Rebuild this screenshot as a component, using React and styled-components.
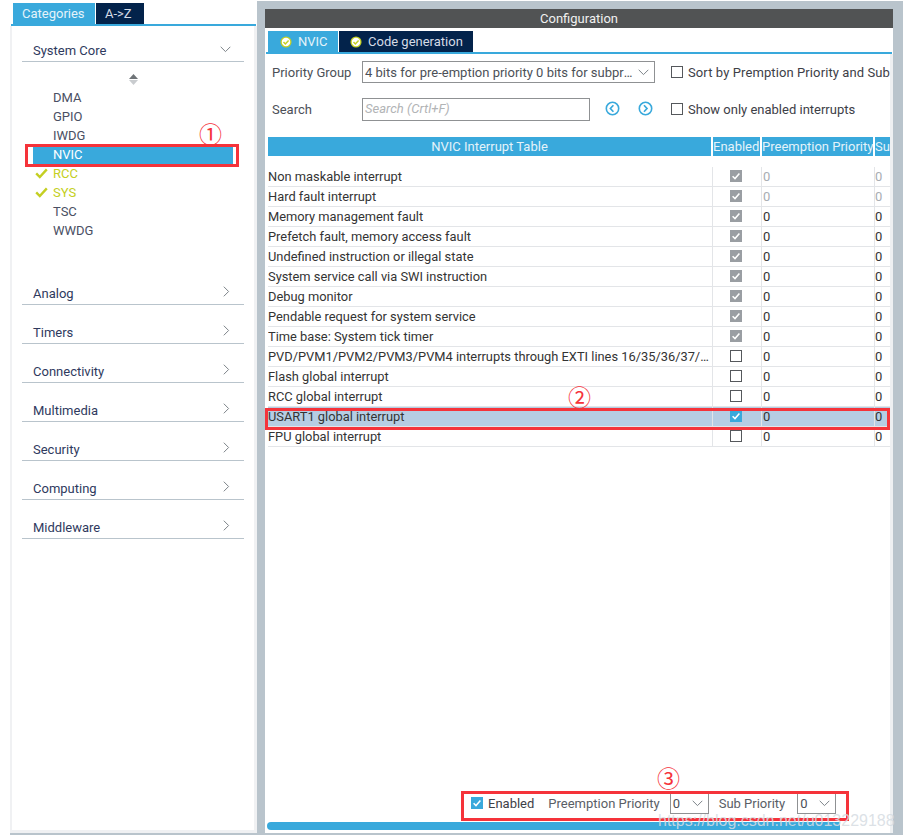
import React from "react";
import styled, { createGlobalStyle } from "styled-components";

const GlobalStyle = createGlobalStyle`
  html, body { margin: 0; padding: 0; background: #fff; }
  * { box-sizing: border-box; }
  body { font-family: Roboto, "Liberation Sans", sans-serif; }
`;

const items = [
  { name: "DMA" },
  { name: "GPIO" },
  { name: "IWDG" },
  { name: "NVIC", active: true },
  { name: "RCC", ok: true },
  { name: "SYS", ok: true },
  { name: "TSC" },
  { name: "WWDG" },
];

const groups = ["Analog", "Timers", "Connectivity", "Multimedia", "Security", "Computing", "Middleware"];

const rows = [
  { name: "Non maskable interrupt", state: "locked", dim: true },
  { name: "Hard fault interrupt", state: "locked", dim: true },
  { name: "Memory management fault", state: "locked" },
  { name: "Prefetch fault, memory access fault", state: "locked" },
  { name: "Undefined instruction or illegal state", state: "locked" },
  { name: "System service call via SWI instruction", state: "locked" },
  { name: "Debug monitor", state: "locked" },
  { name: "Pendable request for system service", state: "locked" },
  { name: "Time base: System tick timer", state: "locked" },
  { name: "PVD/PVM1/PVM2/PVM3/PVM4 interrupts through EXTI lines 16/35/36/37/38 interrupt", state: "off" },
  { name: "Flash global interrupt", state: "off" },
  { name: "RCC global interrupt", state: "off" },
  { name: "USART1 global interrupt", state: "on", selected: true },
  { name: "FPU global interrupt", state: "off" },
];

function Chevron({ dir = "down" }) {
  const down = dir === "down";
  return (
    <ChevronSvg width={down ? 11 : 7} height={down ? 7 : 11} viewBox={down ? "0 0 11 7" : "0 0 7 11"}>
      <path d={down ? "M.7.8l4.8 4.8L10.3.8" : "M.8.7l4.8 4.8L.8 10.3"} fill="none" stroke="#7c8388" strokeWidth="1" />
    </ChevronSvg>
  );
}

function Check({ state }) {
  return (
    <CheckBox $state={state}>
      {state !== "off" && (
        <svg width="12" height="12" viewBox="0 0 12 12">
          <path d="M2.6 6.2l2.4 2.4 4.4-5" fill="none" stroke="#fff" strokeWidth="1.5" />
        </svg>
      )}
    </CheckBox>
  );
}

function TabBadge() {
  return (
    <svg width="12" height="12" viewBox="0 0 13 13">
      <circle cx="6.5" cy="6.5" r="6" fill="#c4cf22" />
      <circle cx="6.5" cy="6.5" r="4.6" fill="#fff" />
      <path d="M3.8 6.6l2 2 3.5-3.8" fill="none" stroke="#c4cf22" strokeWidth="1.6" />
    </svg>
  );
}

function RoundArrow({ dir }) {
  const d = dir === "left" ? "M8.4 4.2L5.4 7.5l3 3.3" : "M6 4.2l3 3.3-3 3.3";
  return (
    <svg width="15" height="15" viewBox="0 0 15 15">
      <circle cx="7.5" cy="7.5" r="6.2" fill="none" stroke="#39a9dc" strokeWidth="1.6" />
      <path d={d} fill="none" stroke="#39a9dc" strokeWidth="1.7" />
    </svg>
  );
}

export default function App() {
  return (
    <Page>
      <GlobalStyle />
      <Frame>
        <LeftPane>
          <TabRow>
            <Tab $active $w={82} $pad={9}>Categories</Tab>
            <Tab $w={48} $pad={9}>A-&gt;Z</Tab>
          </TabRow>
          <LeftBody>
            <GroupHead $first>
              <span>System Core</span>
              <Chevron />
            </GroupHead>
            <Spinner>
              <svg width="9" height="11" viewBox="0 0 9 11">
                <path d="M4.5 0L9 5H0z" fill="#6f7478" />
                <path d="M0 6h9L4.5 11z" fill="#c9cccf" />
              </svg>
            </Spinner>
            <ItemList>
              {items.map((it) => (
                <Item key={it.name} $active={it.active} $ok={it.ok}>
                  {it.ok && (
                    <OkMark width="13" height="11" viewBox="0 0 13 11">
                      <path d="M1.2 5.4l3.6 3.6L11.8 1.4" fill="none" stroke="#c4cf22" strokeWidth="2.4" />
                    </OkMark>
                  )}
                  {it.name}
                </Item>
              ))}
            </ItemList>
            {groups.map((g) => (
              <GroupHead key={g}>
                <span>{g}</span>
                <Chevron dir="right" />
              </GroupHead>
            ))}
          </LeftBody>
        </LeftPane>

        <RightPane>
          <TitleBar>Configuration</TitleBar>
          <TabRow $top={3}>
            <Tab $active $w={70} $pad={12}><TabBadge />NVIC</Tab>
            <Tab $w={134} $pad={11}><TabBadge />Code generation</Tab>
          </TabRow>
          <RightBody>
            <Toolbar>
              <Label>Priority Group</Label>
              <SelectBox>
                <SelectText>4 bits for pre-emption priority 0 bits for subpriority</SelectText>
                <Chevron />
              </SelectBox>
              <Spacer />
              <Check state="off" />
              <OptionText $wide>Sort by Premption Priority and Sub Priority</OptionText>
            </Toolbar>
            <Toolbar $second>
              <Label>Search</Label>
              <SearchBox>Search (Crtl+F)</SearchBox>
              <ArrowGroup>
                <RoundArrow dir="left" />
                <RoundArrow dir="right" />
              </ArrowGroup>
              <Check state="off" />
              <OptionText>Show only enabled interrupts</OptionText>
            </Toolbar>

            <Table>
              <HeadRow>
                <HeadCell $center>NVIC Interrupt Table</HeadCell>
                <HeadCell>Enabled</HeadCell>
                <HeadCell>Preemption Priority</HeadCell>
                <HeadCell>Sub Priority</HeadCell>
              </HeadRow>
              {rows.map((r) => (
                <Row key={r.name} $selected={r.selected}>
                  <NameCell>{r.name}</NameCell>
                  <CheckCell><Check state={r.state} /></CheckCell>
                  <ValueCell $dim={r.dim}>0</ValueCell>
                  <ValueCell $dim={r.dim} $last>0</ValueCell>
                </Row>
              ))}
            </Table>

            <BottomBar>
              <Check state="on" />
              <BottomLabel $strong>Enabled</BottomLabel>
              <BottomLabel>Preemption Priority</BottomLabel>
              <MiniSelect><span>0</span><Chevron /></MiniSelect>
              <BottomLabel $gap={12}>Sub Priority</BottomLabel>
              <MiniSelect><span>0</span><Chevron /></MiniSelect>
            </BottomBar>
            <ScrollThumb />
          </RightBody>
        </RightPane>
      </Frame>

      <RedBox $x={25} $y={144} $w={214} $h={23} />
      <RedBox $x={265} $y={408} $w={625} $h={22} />
      <RedBox $x={461} $y={791} $w={388} $h={30} />
      <Mark $x={199} $y={120}>①</Mark>
      <Mark $x={568} $y={383}>②</Mark>
      <Mark $x={657} $y={764}>③</Mark>
      <Watermark>https://blog.csdn.net/u013229188</Watermark>
    </Page>
  );
}

const Page = styled.div`
  position: relative;
  width: 903px;
  height: 840px;
  padding: 1px 0 5px 10px;
  overflow: hidden;
  background: #fff;
`;

const Frame = styled.div`
  display: flex;
  width: 893px;
  height: 834px;
  padding-bottom: 2px;
  background: #b9c4cc;
`;

const LeftPane = styled.div`
  display: flex;
  flex-direction: column;
  flex: none;
  width: 247px;
  margin-top: -1px;
  padding-top: 3px;
  background: #fff;
`;

const TabRow = styled.div`
  display: flex;
  flex: none;
  gap: 1px;
  padding: ${(p) => p.$top || 0}px 0 0 2px;
  margin: 0 1px;
  border-bottom: 2px solid #39a9dc;
`;

const Tab = styled.div`
  display: flex;
  align-items: center;
  gap: 6px;
  width: ${(p) => p.$w}px;
  height: 21px;
  padding-left: ${(p) => p.$pad}px;
  color: ${(p) => (p.$active ? "#e4f3fa" : "#d5dbe6")};
  background: ${(p) => (p.$active ? "#39a9dc" : "#03234b")};
  font-size: 13px;
`;

const LeftBody = styled.div`
  flex: 1;
  padding: 0 10px;
  border: solid #f0f1f3;
  border-width: 0 3px 3px 2px;
`;

const GroupHead = styled.div`
  display: flex;
  justify-content: space-between;
  height: ${(p) => (p.$first ? 36 : 39)}px;
  padding: ${(p) => (p.$first ? "17px 13px" : "20px 14px")} 0 11px;
  border-bottom: 1px solid #b9c4cc;
  color: #2f3a5e;
  font-size: 13px;
  line-height: 15px;
  & > svg { margin-top: ${(p) => (p.$first ? 3 : 0)}px; }
`;

const ChevronSvg = styled.svg`
  flex: none;
`;

const Spinner = styled.div`
  display: flex;
  justify-content: center;
  height: 23px;
  padding-top: 12px;
`;

const ItemList = styled.div`
  display: flex;
  flex-direction: column;
  height: 181px;
  padding: 3px 0 0 11px;
`;

const Item = styled.div`
  position: relative;
  display: flex;
  align-items: center;
  flex: none;
  width: 200px;
  height: 19px;
  padding-left: 20px;
  color: ${(p) => (p.$active ? "#fff" : p.$ok ? "#c4cf22" : "#4a4f63")};
  background: ${(p) => (p.$active ? "#39a9dc" : "transparent")};
  font-size: 13px;
`;

const OkMark = styled.svg`
  position: absolute;
  left: 2px;
  top: 4px;
`;

const RightPane = styled.div`
  display: flex;
  flex-direction: column;
  flex: none;
  width: 628px;
  margin: 8px 0 0 8px;
  overflow: hidden;
  background: #fff;
`;

const TitleBar = styled.div`
  display: flex;
  align-items: center;
  justify-content: center;
  flex: none;
  height: 19px;
  color: #f0f0f0;
  background: #515354;
  font-size: 13px;
`;

const RightBody = styled.div`
  display: flex;
  flex-direction: column;
  flex: 1;
  padding: 7px 0 3px 3px;
  overflow: hidden;
  border-right: 3px solid #eef0f2;
`;

const Toolbar = styled.div`
  display: flex;
  align-items: center;
  flex: none;
  height: ${(p) => (p.$second ? 24 : 22)}px;
  margin-top: ${(p) => (p.$second ? 14 : 0)}px;
  padding-left: 4px;
  overflow: hidden;
  white-space: nowrap;
`;

const Label = styled.div`
  flex: none;
  width: 90px;
  color: #4c5057;
  font-size: 13px;
`;

const SelectBox = styled.div`
  display: flex;
  align-items: center;
  justify-content: space-between;
  flex: none;
  width: 293px;
  height: 22px;
  padding: 0 5px 0 2px;
  border: 1px solid #8f9193;
  color: #4c5057;
  font-size: 13px;
`;

const SelectText = styled.span`
  width: 268px;
  overflow: hidden;
  text-overflow: ellipsis;
  white-space: nowrap;
`;

const Spacer = styled.div`
  flex: none;
  width: 16px;
`;

const OptionText = styled.div`
  margin-left: 5px;
  color: #3d4047;
  font-size: 13px;
  letter-spacing: ${(p) => (p.$wide ? "0.1px" : "0")};
`;

const SearchBox = styled.div`
  display: flex;
  align-items: center;
  flex: none;
  width: 228px;
  height: 23px;
  padding: 0 0 1px 2px;
  border: 1px solid #8f9193;
  color: #b2b4b6;
  font-size: 13px;
  font-style: italic;
`;

const ArrowGroup = styled.div`
  display: flex;
  justify-content: space-between;
  flex: none;
  width: 48px;
  margin: -2px 18px 0 15px;
`;

const CheckBox = styled.span`
  display: inline-flex;
  flex: none;
  width: 12px;
  height: 12px;
  border: ${(p) => (p.$state === "off" ? "1px solid #55585c" : "none")};
  background: ${(p) =>
    p.$state === "locked" ? "#9a9ea3" : p.$state === "on" ? "#39a9dc" : "#fff"};
`;

const Table = styled.div`
  display: flex;
  flex-direction: column;
  flex: none;
  width: 622px;
  margin-top: 16px;
  overflow: hidden;
`;

const COLS = "445px 49px 113px 15px";

const HeadRow = styled.div`
  display: grid;
  grid-template-columns: ${COLS};
  height: 19px;
  margin-bottom: 11px;
`;

const HeadCell = styled.div`
  margin-right: 2px;
  overflow: hidden;
  color: #e4f3fa;
  background: #39a9dc;
  font-size: 13px;
  line-height: 19px;
  text-align: ${(p) => (p.$center ? "center" : "left")};
  white-space: nowrap;
  &:last-child { margin-right: 0; }
`;

const Row = styled.div`
  display: grid;
  grid-template-columns: ${COLS};
  height: 20px;
  border-bottom: 1px solid #e3e5e8;
  background: ${(p) => (p.$selected ? "#b6cde3" : "#fff")};
`;

const NameCell = styled.div`
  padding-right: 2px;
  overflow: hidden;
  border-right: 1px solid #e3e5e8;
  color: #333;
  font-size: 12.85px;
  line-height: 19px;
  text-overflow: ellipsis;
  white-space: nowrap;
`;

const CheckCell = styled.div`
  display: flex;
  align-items: center;
  justify-content: center;
  padding: 0 2px 1px 0;
  border-right: 1px solid #e3e5e8;
`;

const ValueCell = styled.div`
  padding-left: ${(p) => (p.$last ? 0 : 1)}px;
  border-right: ${(p) => (p.$last ? "none" : "1px solid #e3e5e8")};
  color: ${(p) => (p.$dim ? "#a8adb2" : "#333")};
  font-size: 13px;
  line-height: 19px;
`;

const BottomBar = styled.div`
  display: flex;
  align-items: center;
  align-self: flex-start;
  flex: none;
  height: 22px;
  margin: auto 0 0 203px;
`;

const BottomLabel = styled.div`
  margin: 0 ${(p) => p.$gap || 10}px 0 ${(p) => (p.$strong ? "5px" : "4px")};
  color: ${(p) => (p.$strong ? "#3d4047" : "#5a5e66")};
  font-size: 13px;
  white-space: nowrap;
`;

const MiniSelect = styled.div`
  display: flex;
  align-items: center;
  justify-content: space-between;
  flex: none;
  width: 39px;
  height: 22px;
  margin-right: 6px;
  padding: 0 5px 0 2px;
  border: 1px solid #8f9193;
  color: #4c5057;
  font-size: 13px;
`;

const ScrollThumb = styled.div`
  flex: none;
  width: 573px;
  height: 8px;
  margin: 8px 0 0 -1px;
  border-radius: 4px 0 0 4px;
  background: #39a9dc;
`;

const RedBox = styled.div`
  position: absolute;
  left: ${(p) => p.$x}px;
  top: ${(p) => p.$y}px;
  width: ${(p) => p.$w}px;
  height: ${(p) => p.$h}px;
  border: 3px solid #f5333a;
`;

const Mark = styled.div`
  position: absolute;
  left: ${(p) => p.$x}px;
  top: ${(p) => p.$y}px;
  color: #f5333a;
  font-family: "Noto Sans CJK SC", sans-serif;
  font-size: 23px;
  line-height: 26px;
`;

const Watermark = styled.div`
  position: absolute;
  left: 658px;
  top: 811px;
  color: rgba(214, 220, 226, 0.85);
  font-family: "Liberation Sans", sans-serif;
  font-size: 16px;
  line-height: 20px;
  white-space: nowrap;
`;
